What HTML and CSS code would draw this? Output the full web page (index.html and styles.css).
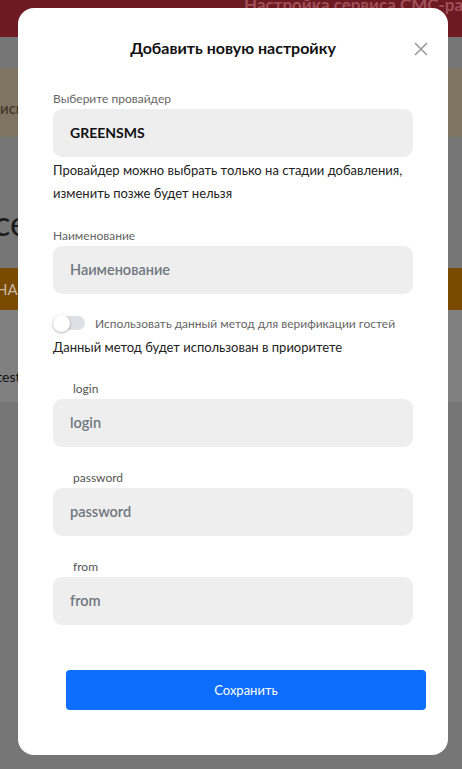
FILE: index.html
```html
<!DOCTYPE html>
<html lang="ru">
<head>
<meta charset="utf-8">
<title>Добавить новую настройку</title>
<link rel="stylesheet" href="styles.css">
</head>
<body>
<div class="page">
  <div class="band band-red"><span class="top-title">Настройка сервиса СМС-рассылок</span></div>
  <div class="band band-gray"></div>
  <div class="band band-tan"><span class="tan-text">исп</span></div>
  <div class="band band-gray2"><span class="big-text">сервис</span></div>
  <div class="band band-orange"><span class="orange-text">НАИМЕНОВАНИЕ</span></div>
  <div class="band band-light"><span class="light-text">test</span></div>
  <div class="band band-rest"></div>
</div>

<div class="modal">
  <div class="modal-header">
    <h2 class="modal-title">Добавить новую настройку</h2>
    <button class="close" aria-label="Закрыть">
      <svg width="14" height="14" viewBox="0 0 14 14"><path d="M1 1L13 13M13 1L1 13" stroke="#9a9a9a" stroke-width="1.6" fill="none"/></svg>
    </button>
  </div>
  <div class="modal-body">
    <div class="field">
      <div class="label">Выберите провайдер</div>
      <div class="input value">GREENSMS</div>
    </div>
    <p class="hint">Провайдер можно выбрать только на стадии добавления, изменить позже будет нельзя</p>

    <div class="field field-name">
      <div class="label">Наименование</div>
      <div class="input placeholder">Наименование</div>
    </div>

    <div class="toggle-row">
      <span class="switch"><span class="knob"></span></span>
      <span class="toggle-label">Использовать данный метод для верификации гостей</span>
    </div>
    <p class="priority">Данный метод будет использован в приоритете</p>

    <div class="field field-param">
      <div class="label label-indent">login</div>
      <div class="input placeholder">login</div>
    </div>
    <div class="field field-param">
      <div class="label label-indent">password</div>
      <div class="input placeholder">password</div>
    </div>
    <div class="field field-param">
      <div class="label label-indent">from</div>
      <div class="input placeholder">from</div>
    </div>

    <button class="save">Сохранить</button>
  </div>
</div>
</body>
</html>
```

FILE: styles.css
```css
* { box-sizing: border-box; }
html, body { margin: 0; padding: 0; }
body {
  width: 462px;
  height: 769px;
  overflow: hidden;
  font-family: Lato, "Open Sans", sans-serif;
  background: #767676;
  position: relative;
}

.page { display: flex; flex-direction: column; }
.band { position: relative; overflow: hidden; }
.band-red { height: 37px; background: #6e1a22; }
.band-gray { height: 31px; background: #767676; }
.band-tan { height: 69px; background: #7d7462; }
.band-gray2 { height: 131px; background: #767676; }
.band-orange { height: 42px; background: #7a4a00; }
.band-light { height: 92px; background: #808080; }
.band-rest { height: 367px; background: #767676; }

.top-title {
  display: block;
  margin: -6px 0 0 244px;
  font-size: 17px;
  font-weight: 700;
  color: #a0505a;
  white-space: nowrap;
}
.tan-text {
  display: block;
  margin: 31px 0 0 0;
  font-size: 15px;
  color: #3c3220;
  white-space: nowrap;
}
.big-text {
  display: block;
  margin: 65px 0 0 -6px;
  font-size: 34px;
  color: #1a1a1a;
  white-space: nowrap;
}
.orange-text {
  display: block;
  margin: 12px 0 0 -4px;
  font-size: 15px;
  color: #c9b8a0;
  white-space: nowrap;
}
.light-text {
  display: block;
  margin: 58px 0 0 -3px;
  font-size: 14px;
  color: #111;
  white-space: nowrap;
}

.modal {
  position: absolute;
  left: 18px;
  top: 8px;
  width: 430px;
  height: 747px;
  background: #fff;
  border-radius: 16px;
}

.modal-header {
  position: relative;
  padding-top: 30px;
  text-align: center;
}
.modal-title {
  margin: 0;
  font-size: 16px;
  line-height: 20px;
  font-weight: 700;
  color: #111;
}
.close {
  position: absolute;
  right: 20px;
  top: 34px;
  width: 14px;
  height: 14px;
  padding: 0;
  border: 0;
  background: none;
  display: flex;
}

.modal-body {
  padding: 33px 35px 0 35px;
  display: flex;
  flex-direction: column;
}

.field { display: flex; flex-direction: column; }
.label {
  font-size: 12px;
  line-height: 16px;
  color: #666;
  margin-bottom: 2px;
}
.label-indent { padding-left: 20px; color: #555; }
.input {
  height: 48px;
  border-radius: 9px;
  background: #eeeeee;
  padding: 0 17px 2px 17px;
  display: flex;
  align-items: center;
  font-size: 14.5px;
}
.value { font-weight: 700; color: #111; font-size: 14px; }
.placeholder { font-weight: 600; color: #6f7780; }

.hint {
  margin: 2px 0 0 0;
  font-size: 13px;
  line-height: 23px;
  color: #222;
}
.field-name { margin-top: 23px; }
.field-name .label { margin-bottom: 2px; }

.toggle-row {
  margin-top: 21px;
  height: 16px;
  display: flex;
  align-items: center;
  gap: 10px;
}
.switch {
  position: relative;
  width: 32px;
  height: 14px;
  border-radius: 7px;
  background: #dfe1e6;
}
.knob {
  position: absolute;
  left: 0;
  top: -1.5px;
  width: 17px;
  height: 17px;
  border-radius: 50%;
  background: #fff;
  box-shadow: 0 1px 3px rgba(0,0,0,0.3);
}
.toggle-label {
  font-size: 12px;
  color: #666;
}
.priority {
  margin: 6px 0 0 0;
  font-size: 13px;
  line-height: 20px;
  color: #222;
}

.field-param { margin-top: 24px; }
.field-param + .field-param { margin-top: 23px; }

.save {
  margin: 45px 0 0 13px;
  width: 360px;
  height: 40px;
  border: 0;
  border-radius: 4px;
  background: #0d6efd;
  color: #fff;
  font-family: Lato, "Open Sans", sans-serif;
  font-size: 13px;
}
```
